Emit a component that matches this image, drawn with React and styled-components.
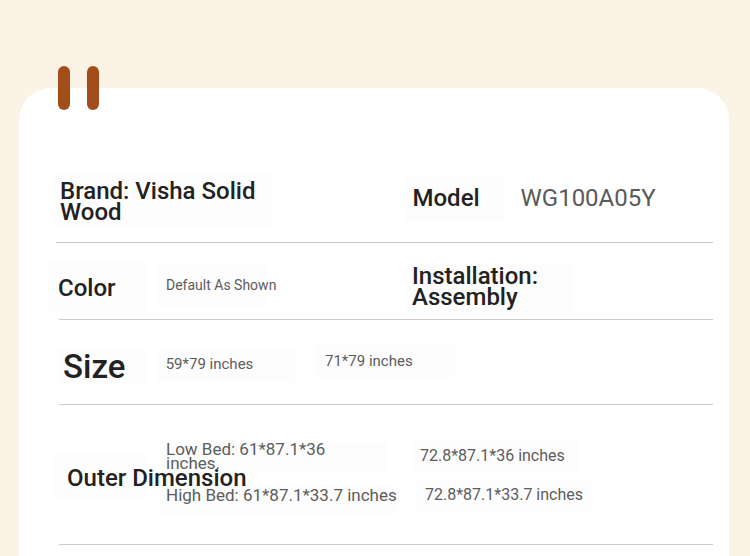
import React from "react";
import styled, { createGlobalStyle } from "styled-components";

const Global = createGlobalStyle`
  html, body {
    margin: 0;
    padding: 0;
    height: 556px;
    overflow: hidden;
    background: #fbf3e6;
    font-family: Roboto, "Noto Sans", "Liberation Sans", sans-serif;
  }
`;

const Page = styled.div`
  width: 750px;
  height: 556px;
  padding-top: 88px;
  box-sizing: border-box;
`;

const Card = styled.section`
  position: relative;
  margin-left: 19px;
  width: 710px;
  min-height: 520px;
  background: #ffffff;
  border-radius: 32px;
  padding: 85px 16px 40px 37px;
  box-sizing: border-box;
`;

const Clips = styled.div`
  position: absolute;
  left: 39px;
  top: -22px;
  display: flex;
  gap: 17px;
`;

const Clip = styled.span`
  display: block;
  width: 12px;
  height: 44px;
  border-radius: 6px;
  background: #a34e1a;
`;

const Row = styled.div`
  display: flex;
  align-items: flex-start;
  height: ${(p) => p.$h}px;
  margin-left: ${(p) => p.$inset || 0}px;
  border-bottom: 1px solid #cbcbcb;
`;

const Chip = styled.div`
  flex: none;
  box-sizing: border-box;
  width: ${(p) => p.$w}px;
  height: ${(p) => p.$h}px;
  margin-left: ${(p) => p.$ml || 0}px;
  margin-top: ${(p) => p.$mt || 0}px;
  padding-top: ${(p) => p.$pt || 0}px;
  padding-left: ${(p) => p.$pl || 0}px;
  background: #fdfdfd;
  position: relative;
  z-index: ${(p) => (p.$front ? 2 : 1)};
`;

const Label = styled.div`
  font-size: ${(p) => p.$fs || 24}px;
  line-height: ${(p) => p.$lh || p.$fs || 24}px;
  font-weight: 500;
  color: #222222;
  white-space: ${(p) => (p.$nowrap ? "nowrap" : "normal")};
  width: ${(p) => (p.$tw ? `${p.$tw}px` : "auto")};
`;

const Value = styled.div`
  font-size: ${(p) => p.$fs || 15}px;
  line-height: ${(p) => p.$lh || p.$fs || 15}px;
  font-weight: 400;
  color: #5c5c5c;
  white-space: ${(p) => (p.$wrap ? "normal" : "nowrap")};
  width: ${(p) => (p.$tw ? `${p.$tw}px` : "auto")};
`;

const ModelValue = styled.div`
  flex: none;
  margin-left: ${(p) => p.$ml}px;
  margin-top: ${(p) => p.$mt}px;
  font-size: 24px;
  line-height: 24px;
  font-weight: 400;
  color: #5a5a5a;
  white-space: nowrap;
`;

const Stack = styled.div`
  flex: none;
  display: flex;
  flex-direction: column;
  align-items: flex-start;
  gap: ${(p) => p.$gap}px;
  margin-left: ${(p) => p.$ml}px;
  margin-top: ${(p) => p.$mt}px;
`;

export default function App() {
  return (
    <Page>
      <Global />
      <Card>
        <Clips>
          <Clip />
          <Clip />
        </Clips>

        <Row $h={69}>
          <Chip $w={220} $h={54} $ml={-4} $pt={8} $pl={8}>
            <Label $lh={21} $tw={205}>Brand: Visha Solid Wood</Label>
          </Chip>
          <Chip $w={100} $h={47} $ml={132} $mt={2} $pt={10.5} $pl={8.5}>
            <Label $nowrap>Model</Label>
          </Chip>
          <ModelValue $ml={16.5} $mt={12.5}>WG100A05Y</ModelValue>
        </Row>

        <Row $h={76} $inset={3}>
          <Chip $w={99} $h={52} $ml={-11} $mt={17} $pt={16} $pl={10}>
            <Label $nowrap>Color</Label>
          </Chip>
          <Chip $w={110} $h={43} $ml={10} $mt={21} $pt={14.2} $pl={9}>
            <Value $fs={14}>Default As Shown</Value>
          </Chip>
          <Chip $w={170} $h={49} $ml={137} $mt={20} $pt={2.5} $pl={8}>
            <Label $lh={21} $tw={150}>Installation: Assembly</Label>
          </Chip>
        </Row>

        <Row $h={84} $inset={3}>
          <Chip $w={90} $h={35} $ml={-1} $mt={28} $pt={1.5} $pl={5}>
            <Label $fs={33} $nowrap>Size</Label>
          </Chip>
          <Chip $w={138} $h={34} $ml={9} $mt={28} $pt={8.7} $pl={8.7}>
            <Value>59*79 inches</Value>
          </Chip>
          <Chip $w={140} $h={35} $ml={20} $mt={23} $pt={11} $pl={10}>
            <Value>71*79 inches</Value>
          </Chip>
        </Row>

        <Row $h={139} $inset={3}>
          <Chip $w={95} $h={48} $ml={-7} $mt={47} $pt={14} $pl={15} $front>
            <Label $nowrap>Outer Dimension</Label>
          </Chip>
          <Stack $ml={14} $mt={37} $gap={12}>
            <Chip $w={227} $h={30} $pl={5}>
              <Value $fs={17} $lh={14} $wrap $tw={200}>
                Low Bed: 61*87.1*36 inches.
              </Value>
            </Chip>
            <Chip $w={236} $h={32} $pt={3.4} $pl={5}>
              <Value $fs={17} $lh={17}>
                High Bed: 61*87.1*33.7 inches
              </Value>
            </Chip>
          </Stack>
          <Stack $ml={15} $mt={35} $gap={7}>
            <Chip $w={168} $h={32} $pt={8} $pl={8}>
              <Value $fs={16} $lh={16}>72.8*87.1*36 inches</Value>
            </Chip>
            <Chip $w={175} $h={33} $ml={5} $pt={7.5} $pl={8}>
              <Value $fs={16} $lh={16}>72.8*87.1*33.7 inches</Value>
            </Chip>
          </Stack>
        </Row>
      </Card>
    </Page>
  );
}
